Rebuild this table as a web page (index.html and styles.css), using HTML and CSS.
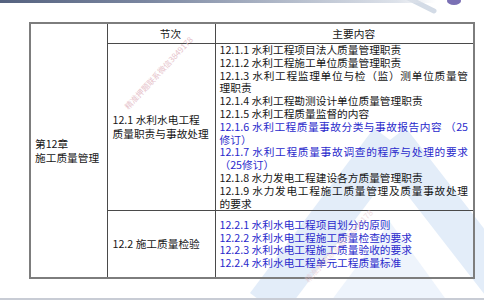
FILE: index.html
```html
<!DOCTYPE html>
<html lang="zh-CN">
<head>
<meta charset="utf-8">
<title>第12章 施工质量管理</title>
<link rel="stylesheet" href="styles.css">
</head>
<body>
<div class="slide">
  <svg class="bg-art" width="484" height="300" viewBox="0 0 484 300" aria-hidden="true">
    <line x1="266" y1="305" x2="390" y2="140" stroke="#e3edf9" stroke-width="40"/>
    <line x1="390" y1="140" x2="518" y2="305" stroke="#e3edf9" stroke-width="40"/>
    <polygon points="390,140 370,168 410,168" fill="#e3edf9"/>
    <polygon points="328,305 390,222 450,305" fill="#eef4fc"/>
    <line x1="408" y1="-2" x2="434" y2="11" stroke="#d3dbe6" stroke-width="5" stroke-linecap="round"/>
    <ellipse cx="454" cy="1" rx="7" ry="4" fill="#7a70b4"/>
  </svg>

  <div class="topbar"></div>

  <table class="outline">
    <colgroup>
      <col class="c1">
      <col class="c2">
      <col class="c3">
    </colgroup>
    <tr class="head">
      <td rowspan="3" class="chapter">第12章<br>施工质量管理</td>
      <th>节次</th>
      <th>主要内容</th>
    </tr>
    <tr>
      <td class="sec">12.1 水利水电工程<br>质量职责与事故处理</td>
      <td class="items">
        <div>12.1.1 水利工程项目法人质量管理职责</div>
        <div>12.1.2 水利工程施工单位质量管理职责</div>
        <div><span class="jl">12.1.3 水利工程监理单位与检（监）测单位质量管</span>理职责</div>
        <div>12.1.4 水利工程勘测设计单位质量管理职责</div>
        <div>12.1.5 水利工程质量监督的内容</div>
        <div class="blue"><span class="jl">12.1.6 水利工程质量事故分类与事故报告内容 （25</span>修订）</div>
        <div class="blue"><span class="jl">12.1.7 水利工程质量事故调查的程序与处理的要求</span>（25修订）</div>
        <div>12.1.8 水力发电工程建设各方质量管理职责</div>
        <div><span class="jl">12.1.9 水力发电工程施工质量管理及质量事故处理</span>的要求</div>
      </td>
    </tr>
    <tr class="row2">
      <td class="sec">12.2 施工质量检验</td>
      <td class="items blue">
        <div>12.2.1 水利水电工程项目划分的原则</div>
        <div>12.2.2 水利水电工程施工质量检查的要求</div>
        <div>12.2.3 水利水电工程施工质量验收的要求</div>
        <div>12.2.4 水利水电工程单元工程质量标准</div>
      </td>
    </tr>
  </table>

  <div class="footline"></div>

  <div class="stamp stamp-a">精准押题联系微信3849178</div>
  <div class="stamp stamp-b">精准押题联系微信3849178</div>
</div>
</body>
</html>
```

FILE: styles.css
```css
html, body {
  margin: 0;
  padding: 0;
  background: #ffffff;
}

.slide {
  position: relative;
  width: 484px;
  height: 300px;
  overflow: hidden;
  display: flex;
  flex-direction: column;
  background: #ffffff;
  font-family: "Noto Sans CJK SC", "Noto Sans", sans-serif;
  color: #161616;
}

.bg-art {
  position: absolute;
  left: 0;
  top: 0;
  z-index: 0;
}

.topbar {
  position: relative;
  z-index: 1;
  height: 3px;
  background: linear-gradient(90deg, #55627f 0%, #7a86a0 30%, #b4bccb 60%, #dde2ea 82%, rgba(255,255,255,0) 90%);
}

.outline {
  position: relative;
  z-index: 1;
  margin: 19px 0 0 29px;
  width: 444px;
  table-layout: fixed;
  border-collapse: collapse;
  border: 2px solid #7d7d7d;
  font-size: 10.7px;
  line-height: 12.8px;
}

.c1 { width: 77px; }
.c2 { width: 108px; }
.c3 { width: 259px; }

.outline td,
.outline th {
  border: 1px solid #4a4a4a;
  padding: 0;
  vertical-align: middle;
  text-align: left;
  font-weight: normal;
}

.head th {
  height: 19px;
  text-align: center;
  padding-left: 19px;
  line-height: 19px;
}

.chapter {
  padding-left: 4px !important;
  line-height: 14px !important;
}

.sec {
  padding: 0 2px 0 5px !important;
  line-height: 14px !important;
}

.items {
  padding: 0 5px 0 4px !important;
}

.row2 td {
  height: 66px;
}

.jl {
  display: block;
  text-align: justify;
  text-align-last: justify;
}

.blue {
  color: #2a2acc;
}

.footline {
  margin-top: auto;
  height: 2px;
  background: #c8ccd5;
  position: relative;
  z-index: 1;
}

.stamp {
  position: absolute;
  z-index: 2;
  font-size: 8px;
  line-height: 9px;
  white-space: nowrap;
  color: #e6c3cb;
  transform: rotate(-47deg);
  transform-origin: left center;
}

.stamp-a {
  left: 126px;
  top: 103px;
}

.stamp-b {
  left: 306px;
  top: 276px;
  opacity: 0.55;
}
```
